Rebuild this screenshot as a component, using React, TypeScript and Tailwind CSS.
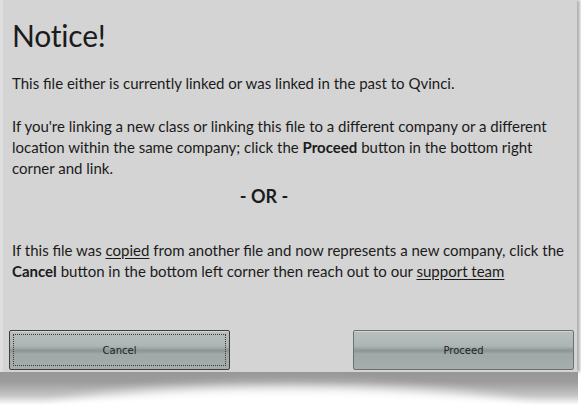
import React from "react";

const font = { fontFamily: "Lato, 'Open Sans', sans-serif" };

const DialogButton = ({ label, focused }: { label: string; focused?: boolean }) => {
  return (
    <button
      className={`${
        focused ? "border-[#3c3c3c]" : "border-[#6b7070]"
      } relative h-[40px] w-[221px] rounded-[2px] border bg-[linear-gradient(to_bottom,#b9c0c0_0%,#adb4b4_40%,#9aa1a1_47%,#8c9393_52%,#a1a8a8_60%,#a6adad_100%)] text-[10px] text-[#222] shadow-[inset_0_1px_0_#d0d5d5]`}
      style={{ fontFamily: "'DejaVu Sans', sans-serif" }}
    >
      {focused && (
        <span className="pointer-events-none absolute inset-[3px] border border-dotted border-[#3a3a3a]" />
      )}
      {label}
    </button>
  );
};

export default function App() {
  return (
    <div className="h-[405px] w-[581px] overflow-hidden bg-white" style={font}>
      {/* dialog */}
      <div className="relative h-[372px] w-[577px] bg-[#d4d4d4] shadow-[3px_0_3px_#b0b0b0] text-[#1b1b1b]">
        <div className="flex h-full flex-col border-l-[3px] border-[#dedede] pl-[9px] pr-[3px]">
          <h1 className="mt-[18px] text-[30px] leading-[34px] tracking-[-0.2px]">Notice!</h1>
          <p className="mt-[21px] text-[15px] leading-[21px]">
            This file either is currently linked or was linked in the past to Qvinci.
          </p>
          <p className="mt-[22px] text-[15px] leading-[21px] whitespace-nowrap">
            If you're linking a new class or linking this file to a different company or a different
            <br />
            location within the same company; click the <b>Proceed</b> button in the bottom right
            <br />
            corner and link.
          </p>
          <p className="mt-[6px] pr-[58px] text-center text-[18px] font-bold leading-[22px]">- OR -</p>
          <p className="mt-[33px] text-[15px] leading-[21px] whitespace-nowrap">
            If this file was <u className="underline-offset-2">copied</u> from another file and now
            represents a new company, click the
            <br />
            <b>Cancel</b> button in the bottom left corner then reach out to our{" "}
            <u className="underline-offset-2">support team</u>
          </p>
          <div className="mt-auto mb-[2px] -ml-[3px] flex justify-between">
            <DialogButton label="Cancel" focused />
            <DialogButton label="Proceed" />
          </div>
        </div>
      </div>
      {/* curled page shadow */}
      <div className="relative h-[33px] w-[578px] bg-[linear-gradient(to_bottom,#979797_0%,#9c9c9c_30%,#c4c4c4_70%,#ffffff_100%)]">
        <div className="absolute left-[40px] top-[14px] h-[60px] w-[500px] rounded-[50%] bg-white blur-[6px]" />
      </div>
    </div>
  );
}
